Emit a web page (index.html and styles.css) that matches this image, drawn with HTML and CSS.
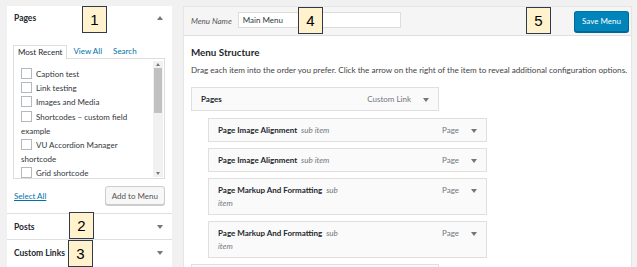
FILE: index.html
```html
<!DOCTYPE html>
<html lang="en">
<head>
  <meta charset="UTF-8">
  <title>Menus</title>
  <link rel="stylesheet" href="styles.css">
</head>
<body>
  <div class="page">
    <div class="sidebar">
      <div class="section open">
        <div class="section-head">
          <span>Pages</span>
          <span class="arrow up"></span>
        </div>
        <div class="section-body">
          <div class="tabs">
            <span class="tab active">Most Recent</span>
            <span class="tab">View All</span>
            <span class="tab">Search</span>
          </div>
          <div class="list-box">
            <div class="list">
              <label class="item"><span class="check"></span>Caption test</label>
              <label class="item"><span class="check"></span>Link testing</label>
              <label class="item"><span class="check"></span>Images and Media</label>
              <label class="item"><span class="check"></span>Shortcodes – custom field<br>example</label>
              <label class="item"><span class="check"></span>VU Accordion Manager<br>shortcode</label>
              <label class="item"><span class="check"></span>Grid shortcode</label>
            </div>
            <div class="scrollbar">
              <span class="arrow up tiny"></span>
              <div class="thumb"></div>
              <div class="track-rest"></div>
              <span class="arrow down tiny"></span>
            </div>
          </div>
          <div class="actions">
            <a class="select-all">Select All</a>
            <button class="button">Add to Menu</button>
          </div>
        </div>
      </div>
      <div class="section">
        <div class="section-head tall">
          <span>Posts</span>
          <span class="arrow down"></span>
        </div>
      </div>
      <div class="section">
        <div class="section-head tall">
          <span>Custom Links</span>
          <span class="arrow down"></span>
        </div>
      </div>
    </div>

    <div class="main">
      <div class="main-head">
        <label class="name-label">Menu Name</label>
        <input class="name-input" type="text" value="Main Menu">
        <button class="button primary">Save Menu</button>
      </div>
      <div class="main-body">
        <h3 class="title">Menu Structure</h3>
        <p class="desc">Drag each item into the order you prefer. Click the arrow on the right of the item to reveal additional configuration options.</p>
        <ul class="menu">
          <li class="menu-item">
            <span class="item-title">Pages</span>
            <span class="item-controls">Custom Link <span class="arrow down"></span></span>
          </li>
          <li class="menu-item sub">
            <span class="item-title">Page Image Alignment <em>sub item</em></span>
            <span class="item-controls">Page <span class="arrow down"></span></span>
          </li>
          <li class="menu-item sub">
            <span class="item-title">Page Image Alignment <em>sub item</em></span>
            <span class="item-controls">Page <span class="arrow down"></span></span>
          </li>
          <li class="menu-item sub">
            <span class="item-title">Page Markup And Formatting <em>sub item</em></span>
            <span class="item-controls">Page <span class="arrow down"></span></span>
          </li>
          <li class="menu-item sub">
            <span class="item-title">Page Markup And Formatting <em>sub item</em></span>
            <span class="item-controls">Page <span class="arrow down"></span></span>
          </li>
          <li class="menu-item">
            <span class="item-title">Page</span>
            <span class="item-controls">Page <span class="arrow down"></span></span>
          </li>
        </ul>
      </div>
    </div>
  </div>

  <div class="note n1">1</div>
  <div class="note n2">2</div>
  <div class="note n3">3</div>
  <div class="note n4">4</div>
  <div class="note n5">5</div>
</body>
</html>
```

FILE: styles.css
```css
body {
  background: #f1f1f1;
  color: #23282d;
  font-family: Lato, "Liberation Sans", sans-serif;
  font-size: 8px;
  margin: 0;
  height: 267px;
  overflow: hidden;
}
.page {
  display: flex;
  gap: 11px;
  padding: 6px 5px 0 7px;
}
.sidebar {
  flex: 0 0 165px;
  background: #fff;
  height: 270px;
}
.section-head {
  display: flex;
  justify-content: space-between;
  align-items: center;
  height: 23px;
  padding: 0 9px 0 7px;
  font-weight: bold;
  font-size: 8.5px;
}
.section-head.tall {
  height: 25px;
  border-top: 1px solid #dfdfdf;
}
.section-body {
  padding: 15px 7px 8px 6px;
}
.arrow {
  display: inline-block;
  width: 0;
  height: 0;
  border-left: 3px solid transparent;
  border-right: 3px solid transparent;
}
.arrow.down {
  border-top: 4px solid #72777c;
}
.arrow.up {
  border-bottom: 4px solid #72777c;
}
.arrow.tiny {
  border-left-width: 2px;
  border-right-width: 2px;
}
.arrow.tiny.up {
  border-bottom: 3px solid #777;
}
.arrow.tiny.down {
  border-top: 3px solid #777;
}
.tabs {
  display: flex;
  align-items: flex-end;
  height: 14px;
}
.tab {
  color: #0073aa;
  padding: 0 5px 0 6px;
  line-height: 13px;
}
.tab.active {
  color: #23282d;
  border: 1px solid #ddd;
  border-bottom: none;
  background: #fff;
  padding: 0 4px;
  margin-bottom: -1px;
  position: relative;
}
.list-box {
  display: flex;
  height: 119px;
  border: 1px solid #ddd;
  overflow: hidden;
}
.list {
  flex: 1;
  padding: 8px 0 0 7px;
}
.item {
  display: block;
  line-height: 14.2px;
  color: #32373c;
}
.check {
  display: inline-block;
  width: 9px;
  height: 9px;
  border: 1px solid #b4b9be;
  margin-right: 4px;
  vertical-align: -2px;
  background: #fff;
}
.scrollbar {
  width: 10px;
  margin: 2px 1px 1px 0;
  background: #f1f1f1;
  display: flex;
  flex-direction: column;
  align-items: center;
}
.scrollbar .arrow.up {
  margin-top: 2px;
}
.thumb {
  width: 8px;
  height: 45px;
  background: #c1c1c1;
  margin-top: 2px;
}
.track-rest {
  flex: 1;
}
.scrollbar .arrow.down {
  margin-bottom: 2px;
}
.actions {
  display: flex;
  justify-content: space-between;
  align-items: center;
  margin-top: 7px;
  padding-left: 1px;
}
.select-all {
  color: #0073aa;
  text-decoration: underline;
}
.button {
  font-family: inherit;
  font-size: 8px;
  color: #555;
  background: #f7f7f7;
  border: 1px solid #ccc;
  border-radius: 3px;
  height: 19px;
  padding: 0 6px;
  box-shadow: 0 1px 0 #ccc;
}
.main {
  flex: 1;
  min-width: 0;
  background: #fff;
  border: 1px solid #e5e5e5;
  height: 270px;
}
.main-head {
  display: flex;
  align-items: center;
  height: 28px;
  padding: 0 2px 0 7px;
  background: #f5f5f5;
  border-bottom: 1px solid #dfdfdf;
}
.name-label {
  font-style: italic;
  color: #555;
  margin-right: 6px;
}
.name-input {
  font-family: inherit;
  font-size: 8px;
  width: 153px;
  height: 14px;
  padding: 0 4px;
  margin-top: -3px;
  border: 1px solid #ddd;
  color: #32373c;
}
.button.primary {
  margin-left: auto;
  height: 21px;
  padding: 0 7px;
  background: #0085ba;
  border-color: #0073aa #006799 #006799;
  color: #fff;
  box-shadow: 0 1px 0 #006799;
}
.main-body {
  padding: 8px 0 0 7px;
}
.title {
  font-size: 9.8px;
  font-weight: bold;
  margin: 0;
  line-height: 16px;
}
.desc {
  margin: 3px 0 0;
  font-size: 8.15px;
  line-height: 14px;
  color: #444;
  white-space: nowrap;
}
.menu {
  list-style: none;
  margin: 10px 0 0;
  padding: 0;
}
.menu-item {
  display: flex;
  justify-content: space-between;
  align-items: flex-start;
  width: 228px;
  padding: 5px 9px 4px 9px;
  margin-bottom: 6px;
  border: 1px solid #dfdfdf;
  background: #fafafa;
  line-height: 13px;
}
.menu-item:first-child {
  margin-bottom: 7px;
}
.menu-item.sub {
  width: 259px;
  margin-left: 17px;
}
.item-title {
  font-weight: bold;
  font-size: 8px;
  max-width: 130px;
}
.item-title em {
  font-weight: normal;
  color: #72777c;
  margin-left: 2px;
}
.item-controls {
  color: #72777c;
  display: flex;
  align-items: center;
  gap: 12px;
}
.note {
  position: absolute;
  width: 23px;
  height: 25px;
  background: #fff2cc;
  border: 1px solid #2f3b4c;
  font-family: "Liberation Sans", sans-serif;
  font-size: 15px;
  text-align: center;
  line-height: 25px;
  color: #000;
}
.n1 { left: 82px; top: 6px; }
.n2 { left: 69px; top: 212px; }
.n3 { left: 68px; top: 240px; }
.n4 { left: 298px; top: 7px; }
.n5 { left: 526px; top: 7px; }
```
